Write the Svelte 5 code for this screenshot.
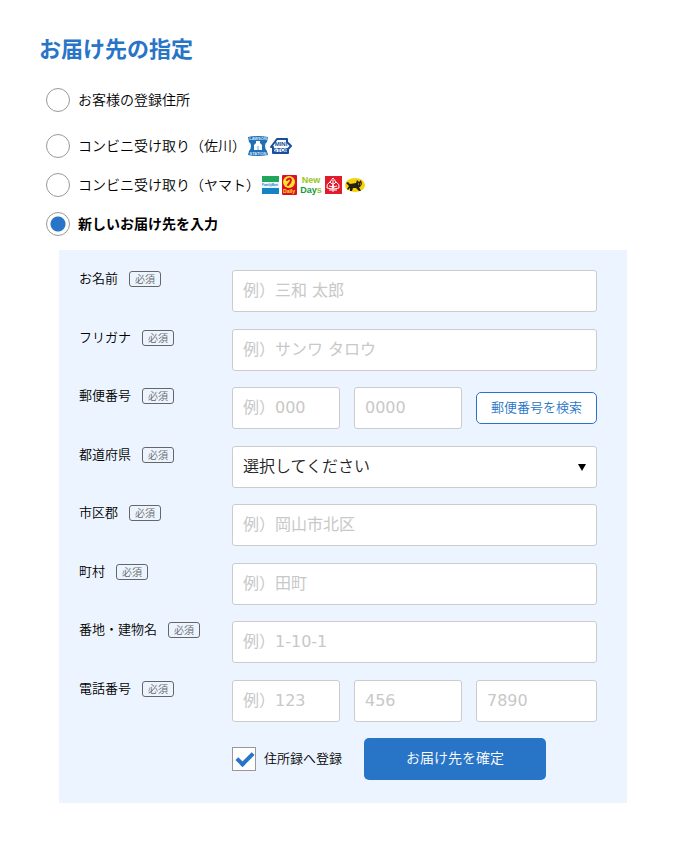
<script>
	let destination = $state('new');
	let saveAddress = $state(true);

	const fields = [
		{ id: 'name', label: 'お名前', inputs: ['例）三和 太郎'] },
		{ id: 'kana', label: 'フリガナ', inputs: ['例）サンワ タロウ'] },
		{ id: 'zip', label: '郵便番号', inputs: ['例）000', '0000'], search: true },
		{ id: 'pref', label: '都道府県', select: true },
		{ id: 'city', label: '市区郡', inputs: ['例）岡山市北区'] },
		{ id: 'town', label: '町村', inputs: ['例）田町'] },
		{ id: 'street', label: '番地・建物名', inputs: ['例）1-10-1'] },
		{ id: 'tel', label: '電話番号', inputs: ['例）123', '456', '7890'] }
	];
</script>

<main>
	<h1>お届け先の指定</h1>

	<div class="choices">
		<label class="first">
			<input type="radio" name="destination" value="registered" bind:group={destination} />
			<span class="text">お客様の登録住所</span>
		</label>
		<label>
			<input type="radio" name="destination" value="sagawa" bind:group={destination} />
			<span class="text">コンビニ受け取り（佐川）</span>
			<span class="logos">
				<!-- Lawson -->
				<svg width="22" height="22" viewBox="0 0 22 22">
					<path
						d="M1 2Q11 0 21 2L20 7Q18 8 18 11Q18 14 20 16L21 20Q11 22 1 20L2 16Q4 14 4 11Q4 8 2 7Z"
						fill="#1f6fb8"
					/>
					<path d="M9 8V6h4v2l2 2v5H7v-5z" fill="#fff" />
					<path d="M10 11h2v4h-2z" fill="#b5d2ec" />
					<text x="11" y="5" class="tiny" fill="#d6e8f7">LAWSON</text>
					<text x="11" y="20" class="tiny" fill="#d6e8f7">STATION</text>
				</svg>
				<!-- Ministop -->
				<svg width="24" height="22" viewBox="0 0 24 22">
					<path
						d="M4 18V12H2L8 4H18V7L22 11L19 14V18Z"
						fill="#fff"
						stroke="#164f9c"
						stroke-width="2"
						stroke-linejoin="round"
					/>
					<text x="12" y="11" class="small" fill="#164f9c">MINI</text>
					<text x="12" y="17" class="small" fill="#164f9c">STOP</text>
				</svg>
			</span>
		</label>
		<label>
			<input type="radio" name="destination" value="yamato" bind:group={destination} />
			<span class="text">コンビニ受け取り（ヤマト）</span>
			<span class="logos yamato">
				<!-- FamilyMart -->
				<svg width="17" height="20" viewBox="0 0 17 20">
					<path d="M0 1h17v6H0z" fill="#22a65a" />
					<path d="M0 7h17v6H0z" fill="#edf7fb" />
					<path d="M0 13h17v6H0z" fill="#1683c7" />
					<text x="8" y="11" class="family" fill="#1683c7">FamilyMart</text>
				</svg>
				<!-- Daily Yamazaki -->
				<svg width="15" height="20" viewBox="0 0 15 20">
					<rect width="15" height="20" rx="1" fill="#dc1020" />
					<circle cx="7" cy="7" r="6" fill="#ffe12e" />
					<path
						d="M5 5Q8 2 9 5Q9 7 6 10"
						fill="none"
						stroke="#dc1020"
						stroke-width="2"
						stroke-linecap="round"
					/>
					<text x="7" y="18" class="daily" fill="#ffe12e">Daily</text>
				</svg>
				<!-- NewDays -->
				<svg width="22" height="20" viewBox="0 0 22 20">
					<text x="11" y="8" class="days" fill="#96c51e">New</text>
					<text x="11" y="18" class="days" fill="#16993f">Day<tspan fill="#96c51e">s</tspan></text>
				</svg>
				<!-- Community store -->
				<svg width="17" height="20" viewBox="0 0 17 20">
					<rect y="1" width="17" height="18" fill="#e11b2c" />
					<g fill="none" stroke="#fff">
						<path d="M8 3L11 7L9 9H7L5 7ZM5 7Q1 9 2 13L7 14L8 10L9 14L14 13Q15 9 11 7" />
						<path d="M4 11L8 12L12 11M8 5V17M4 15H12" />
					</g>
				</svg>
				<!-- Yamato -->
				<svg width="21" height="20" viewBox="0 0 21 20">
					<ellipse cx="10" cy="10" rx="10" ry="7" fill="#f5d20c" />
					<path
						d="M1 8L3 7L5 9L11 8L12 5L14 7L16 5L17 9L15 12L14 12L16 16H14L11 13L8 13L7 16H5L5 13L3 15L2 14L4 11Z"
						fill="#27220d"
					/>
					<path d="M13 9h1M15 9h1" stroke="#f5d20c" />
				</svg>
			</span>
		</label>
		<label>
			<input type="radio" name="destination" value="new" bind:group={destination} />
			<span class="text" class:selected={destination === 'new'}>新しいお届け先を入力</span>
		</label>
	</div>

	<form onsubmit={(e) => e.preventDefault()}>
		{#each fields as field}
			<div class="row">
				<label class="name" for="{field.id}-0">
					<span class="text">{field.label}</span><span class="required">必須</span>
				</label>
				{#if field.select}
					<div class="select">
						<select id="{field.id}-0">
							<option>選択してください</option>
							<option>岡山県</option>
						</select>
					</div>
				{:else}
					<div class="controls" class:split={field.inputs.length > 1}>
						{#each field.inputs as placeholder, i}
							<input
								type="text"
								id="{field.id}-{i}"
								aria-label={i > 0 ? `${field.label} ${i + 1}` : undefined}
								{placeholder}
							/>
						{/each}
						{#if field.search}
							<button type="button" class="search">郵便番号を検索</button>
						{/if}
					</div>
				{/if}
			</div>
		{/each}

		<div class="submit">
			<label>
				<input type="checkbox" bind:checked={saveAddress} />
				<span class="text">住所録へ登録</span>
			</label>
			<button type="submit">お届け先を確定</button>
		</div>
	</form>
</main>

<style>
	:global(body) {
		background: #fff;
	}

	main {
		--blue: #2875c7;
		padding: 30px 73px 38px 39px;
		color: #000;
		font-family: 'Noto Sans CJK JP', sans-serif;
		font-size: 14px;
		font-weight: 350;
		line-height: 24px;
	}

	h1 {
		margin: 0 0 24px;
		color: var(--blue);
		font-size: 22px;
		line-height: 34px;
	}

	input,
	select,
	button {
		box-sizing: border-box;
		margin: 0;
		font-family: 'DejaVu Sans', 'Noto Sans CJK JP', sans-serif;
	}

	/* leaves the glyphs optically centred beside the controls */
	.text {
		padding-bottom: 2px;
	}

	.choices {
		display: flex;
		flex-direction: column;
		align-items: flex-start;
		gap: 15px;
		padding-left: 7px;
		margin-bottom: 14px;
	}

	.choices label {
		display: flex;
		align-items: center;
		height: 24px;
	}

	.choices .first {
		margin-bottom: 7px;
	}

	.selected {
		font-weight: bold;
	}

	input[type='radio'] {
		appearance: none;
		width: 24px;
		height: 24px;
		margin-right: 8px;
		border: 1px solid #999;
		border-radius: 50%;
		background: #fff;
	}

	input[type='radio']:checked {
		background: radial-gradient(circle, var(--blue) 0 7px, #fff 8px);
	}

	.logos {
		display: flex;
		align-items: center;
		margin-left: 1px;
	}

	.yamato {
		gap: 3px;
		margin-left: 2px;
	}

	svg text {
		font-family: 'Liberation Sans', sans-serif;
		font-weight: bold;
		text-anchor: middle;
	}

	.tiny {
		font-size: 4px;
	}

	.small {
		font-size: 6px;
	}

	.daily {
		font-size: 5px;
	}

	.family {
		font-size: 3px;
	}

	.days {
		font-size: 9px;
	}

	form {
		margin-left: 20px;
		padding: 20px 30px 23px 20px;
		background: #ecf5ff;
	}

	.row {
		display: grid;
		grid-template-columns: 153px 1fr;
		align-items: start;
		margin-bottom: 16px;
	}

	.row:nth-child(odd) {
		margin-bottom: 17px;
	}

	.name {
		display: flex;
		align-items: center;
		font-size: 13px;
		line-height: 16px;
	}

	.required {
		margin-left: 11px;
		padding: 0 5px;
		border: 1px solid #666;
		border-radius: 3px;
		color: #666;
		font-size: 10px;
		line-height: 14px;
	}

	.controls {
		display: grid;
		align-items: center;
	}

	.split {
		grid-template-columns: 108px 108px 1fr;
		gap: 14px;
	}

	input[type='text'],
	select {
		width: 100%;
		height: 42px;
		padding: 0 10px 2px;
		border: 1px solid #ccc;
		border-radius: 3px;
		background: #fff;
		color: #222;
		font-size: 16px;
	}

	input::placeholder {
		color: #c8c8c8;
		opacity: 1;
	}

	.select {
		position: relative;
	}

	.select::after {
		content: '';
		position: absolute;
		top: 18px;
		right: 11px;
		border: 4px solid transparent;
		border-top: 7px solid #000;
		border-bottom: 0;
		pointer-events: none;
	}

	select {
		display: block;
		appearance: none;
		font-weight: 350;
	}

	button {
		font-weight: 350;
	}

	.search {
		height: 32px;
		padding: 0 0 4px;
		border: 1px solid var(--blue);
		border-radius: 5px;
		background: #fff;
		color: var(--blue);
		font-size: 13px;
	}

	.submit {
		display: flex;
		align-items: center;
		gap: 22px;
		padding-left: 153px;
	}

	.submit label {
		display: flex;
		align-items: center;
		font-size: 13px;
	}

	input[type='checkbox'] {
		appearance: none;
		width: 24px;
		height: 24px;
		margin-right: 8px;
		border: 1px solid #999;
		background: #fff;
	}

	input[type='checkbox']:checked::after {
		content: '';
		display: block;
		width: 6px;
		height: 13px;
		margin: 1px 0 0 7px;
		border: solid var(--blue);
		border-width: 0 4px 4px 0;
		transform: rotate(45deg);
	}

	.submit button {
		width: 182px;
		height: 42px;
		padding: 0 0 4px;
		border: 0;
		border-radius: 5px;
		background: var(--blue);
		color: #fff;
		font-size: 14px;
	}
</style>
